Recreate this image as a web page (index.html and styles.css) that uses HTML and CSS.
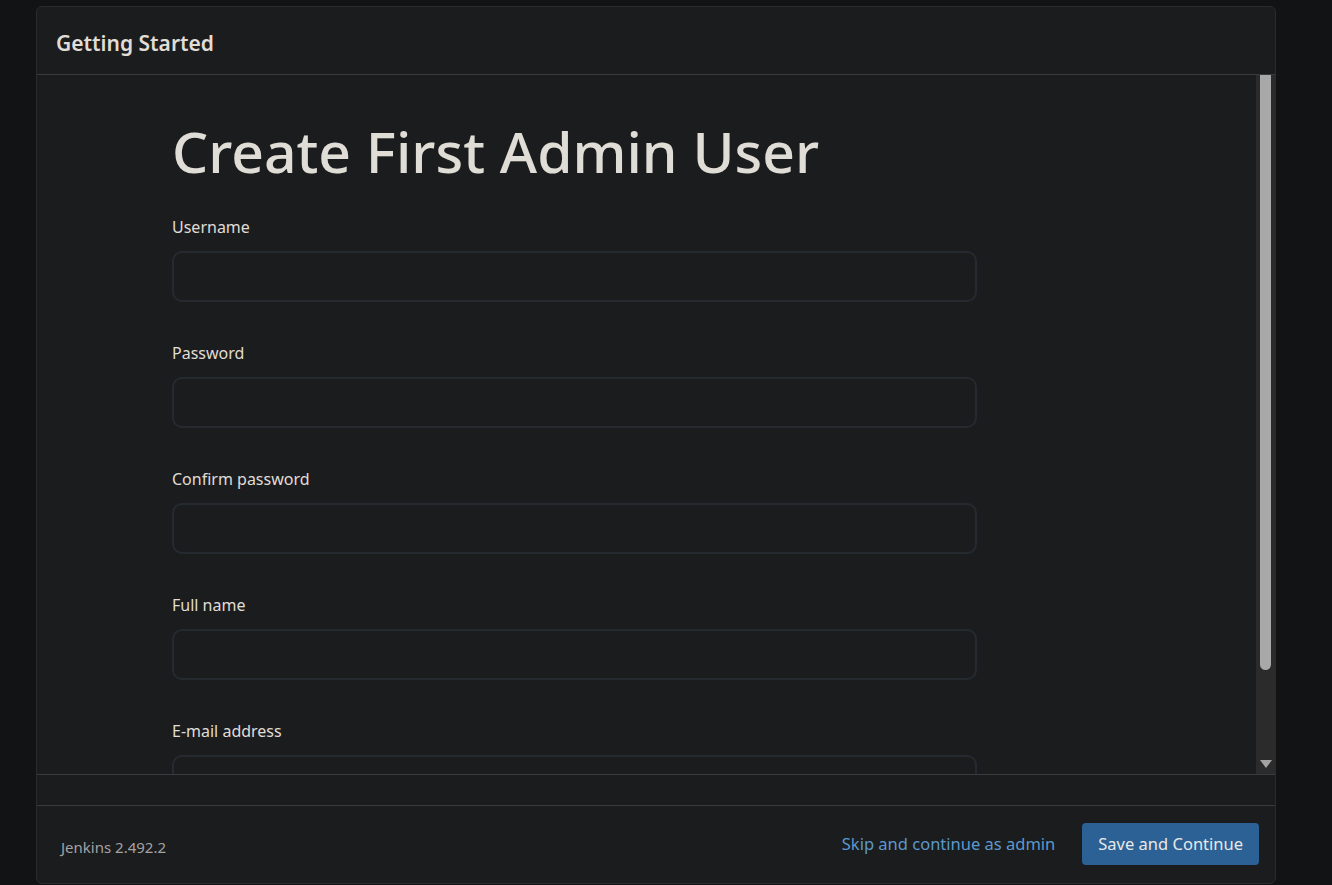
FILE: index.html
```html
<!DOCTYPE html>
<html lang="en">
<head>
<meta charset="utf-8">
<title>Getting Started</title>
<link rel="stylesheet" href="styles.css">
</head>
<body>
<div class="panel">
  <div class="panel-header">
    <h2 class="panel-title">Getting Started</h2>
  </div>
  <div class="panel-body">
    <div class="content">
      <h1 class="page-title">Create First Admin User</h1>
      <form class="form">
        <div class="field">
          <label class="label">Username</label>
          <div class="input"></div>
        </div>
        <div class="field">
          <label class="label">Password</label>
          <div class="input"></div>
        </div>
        <div class="field">
          <label class="label">Confirm password</label>
          <div class="input"></div>
        </div>
        <div class="field">
          <label class="label">Full name</label>
          <div class="input"></div>
        </div>
        <div class="field">
          <label class="label">E-mail address</label>
          <div class="input"></div>
        </div>
      </form>
    </div>
    <div class="scrollbar">
      <div class="thumb"></div>
      <div class="track-rest"></div>
      <div class="arrow"></div>
    </div>
  </div>
  <div class="panel-band"></div>
  <div class="panel-footer">
    <span class="version">Jenkins 2.492.2</span>
    <div class="actions">
      <a class="skip" href="#">Skip and continue as admin</a>
      <button class="save" type="button">Save and Continue</button>
    </div>
  </div>
</div>
</body>
</html>
```

FILE: styles.css
```css
* { box-sizing: border-box; }
html, body {
  margin: 0;
  padding: 0;
  background: #121314;
  height: 885px;
  overflow: hidden;
  font-family: "Noto Sans", "Open Sans", sans-serif;
  color: #e0ddd6;
}
.panel {
  margin: 6px 0 0 36px;
  width: 1240px;
  height: 878px;
  background: #1b1c1e;
  border: 1px solid #2a2b2d;
  border-radius: 6px;
  display: flex;
  flex-direction: column;
  overflow: hidden;
}
.panel-header {
  height: 68px;
  flex: none;
  display: flex;
  align-items: center;
  padding: 4px 19px 0;
  border-bottom: 1px solid #3a3b3d;
}
.panel-title {
  margin: 0;
  font-size: 21px;
  font-weight: 600;
  color: #e0ddd6;
}
.panel-body {
  height: 700px;
  flex: none;
  display: flex;
  border-bottom: 1px solid #3a3b3d;
}
.content {
  flex: 1;
  overflow: hidden;
  padding: 40px 0 0 135px;
}
.page-title {
  margin: 0 0 29px;
  font-size: 57px;
  font-weight: 500;
  line-height: 72px;
  color: #e0ddd6;
}
.form {
  display: flex;
  flex-direction: column;
  gap: 40px;
  width: 805px;
}
.field {
  display: flex;
  flex-direction: column;
  gap: 13px;
}
.label {
  font-size: 16px;
  line-height: 22px;
  color: #e0ddd6;
}
.input {
  height: 51px;
  border: 2px solid #252a30;
  border-radius: 10px;
  background: #1b1c1e;
}
.scrollbar {
  width: 19px;
  flex: none;
  background: #2b2b2b;
  display: flex;
  flex-direction: column;
  align-items: center;
  padding-bottom: 6px;
}
.thumb {
  width: 11px;
  height: 595px;
  background: #a8a8a8;
  border-radius: 0 0 6px 6px;
}
.track-rest { flex: 1; }
.arrow {
  width: 0;
  height: 0;
  border-left: 6px solid transparent;
  border-right: 6px solid transparent;
  border-top: 8px solid #a3a3a3;
}
.panel-band {
  height: 31px;
  flex: none;
  border-bottom: 1px solid #3a3b3d;
}
.panel-footer {
  flex: 1;
  display: flex;
  align-items: center;
  justify-content: space-between;
  padding: 0 16px 2px 24px;
}
.version {
  font-size: 15px;
  color: #a3a3a3;
  padding-top: 6px;
}
.actions {
  display: flex;
  align-items: center;
  gap: 27px;
}
.skip {
  font-size: 16.5px;
  color: #5b99cd;
  text-decoration: none;
}
.save {
  height: 42px;
  padding: 0 16px;
  border: none;
  border-radius: 4px;
  background: #2b6194;
  color: #e8e8e8;
  font-family: inherit;
  font-size: 16.5px;
}
```
